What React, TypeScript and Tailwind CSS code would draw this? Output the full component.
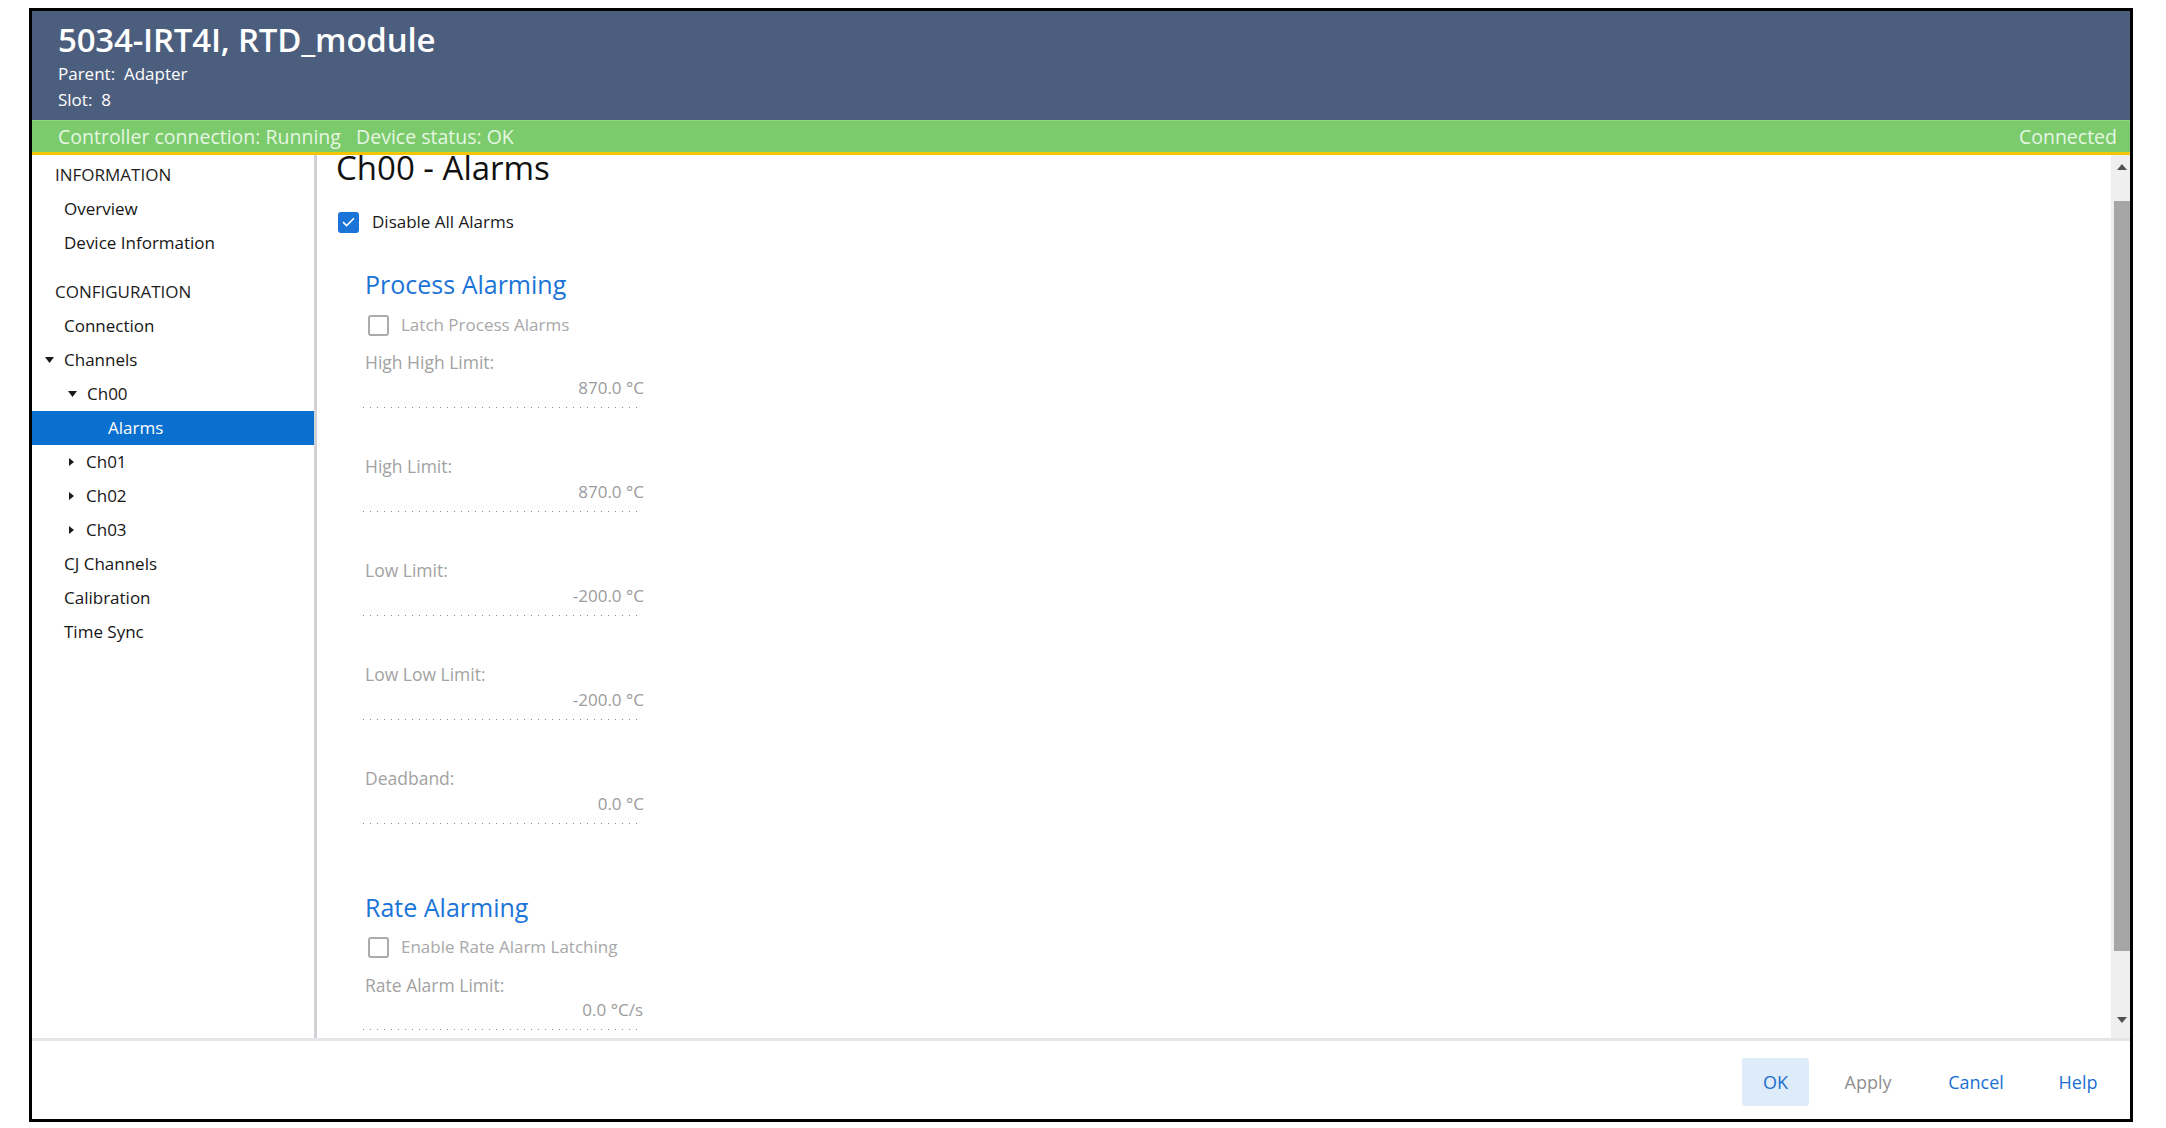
import React from 'react';

const font = { fontFamily: '"Open Sans", "Noto Sans", sans-serif' };

type NavItem = { label: string; indent: number; caret?: 'down' | 'right'; selected?: boolean };

const infoItems: NavItem[] = [
  { label: 'Overview', indent: 32 },
  { label: 'Device Information', indent: 32 },
];

const configItems: NavItem[] = [
  { label: 'Connection', indent: 32 },
  { label: 'Channels', indent: 32, caret: 'down' },
  { label: 'Ch00', indent: 55, caret: 'down' },
  { label: 'Alarms', indent: 76, selected: true },
  { label: 'Ch01', indent: 54, caret: 'right' },
  { label: 'Ch02', indent: 54, caret: 'right' },
  { label: 'Ch03', indent: 54, caret: 'right' },
  { label: 'CJ Channels', indent: 32 },
  { label: 'Calibration', indent: 32 },
  { label: 'Time Sync', indent: 32 },
];

const fields = [
  { label: 'High High Limit:', value: '870.0 °C' },
  { label: 'High Limit:', value: '870.0 °C' },
  { label: 'Low Limit:', value: '-200.0 °C' },
  { label: 'Low Low Limit:', value: '-200.0 °C' },
  { label: 'Deadband:', value: '0.0 °C' },
];

function Caret({ dir }: { dir: 'down' | 'right' }) {
  if (dir === 'down') {
    return (
      <svg width="9" height="6" viewBox="0 0 9 6" className="absolute left-[-19px] top-[14px]">
        <path d="M0 0 H9 L4.5 6 Z" fill="#1a1a1a" />
      </svg>
    );
  }
  return (
    <svg width="5" height="8" viewBox="0 0 5 8" className="absolute left-[-17px] top-[13px]">
      <path d="M0 0 L5 4 L0 8 Z" fill="#1a1a1a" />
    </svg>
  );
}

function NavRow({ item }: { item: NavItem }) {
  return (
    <div
      className={`h-[34px] flex items-center text-[17px] ${item.selected ? 'bg-[#0a70d0] text-white' : 'text-[#161616]'}`}
    >
      <div className="relative h-[34px] flex items-center" style={{ marginLeft: item.indent }}>
        {item.caret && <Caret dir={item.caret} />}
        {item.label}
      </div>
    </div>
  );
}

function Dotted() {
  return (
    <div className="ml-[-2px] w-[277px] h-px bg-[repeating-linear-gradient(to_right,#8e8e8e_0_1px,transparent_1px_7px)]" />
  );
}

function CheckBox({ checked }: { checked?: boolean }) {
  if (checked) {
    return (
      <div className="w-[21px] h-[21px] rounded-[3px] bg-[#1b74d8] flex items-center justify-center">
        <svg width="13" height="10" viewBox="0 0 13 10">
          <path d="M1 5.2 L4.6 8.6 L12 1.2" stroke="#fff" strokeWidth="1.6" fill="none" />
        </svg>
      </div>
    );
  }
  return <div className="w-[21px] h-[21px] rounded-[3px] border-2 border-[#ababab] bg-white" />;
}

function Field({ label, value }: { label: string; value: string }) {
  return (
    <div className="h-[104px]">
      <div className="h-[24px] leading-[24px] text-[17.5px] text-[#a2a2a2]">{label}</div>
      <div className="mt-[3px] w-[279px] h-[22px] leading-[22px] text-[17px] text-[#9c9c9c] text-right">{value}</div>
      <div className="mt-[8px]">
        <Dotted />
      </div>
    </div>
  );
}

export default function App() {
  return (
    <div className="w-[2166px] h-[1128px] bg-white pt-[8px] pl-[29px]" style={font}>
      <div className="w-[2104px] h-[1114px] border-[3px] border-black flex flex-col overflow-hidden">
        {/* header */}
        <div className="h-[109px] bg-[#4c5e7e] pl-[26px] pt-[9px] text-white shrink-0">
          <div className="h-[40px] leading-[40px] text-[33px] font-semibold tracking-[-0.2px]">5034-IRT4I, RTD_module</div>
          <div className="mt-[1px] h-[26px] leading-[26px] text-[17px]">Parent:&nbsp; Adapter</div>
          <div className="h-[26px] leading-[26px] text-[17px]">Slot:&nbsp; 8</div>
        </div>
        {/* status */}
        <div className="h-[32px] bg-[#7bcb6c] border-t border-[#8ed680] flex items-center justify-between pl-[26px] pr-[13px] text-[19.5px] text-[#e6f6e2] shrink-0">
          <span>
            Controller connection: Running&nbsp;&nbsp; Device status: OK
          </span>
          <span>Connected</span>
        </div>
        <div className="h-[3px] bg-[#f3c600] shrink-0" />

        {/* body */}
        <div className="flex-1 flex min-h-0">
          <div className="w-[282px] shrink-0 pt-[3px]">
            <div className="h-[34px] flex items-center pl-[23px] text-[17px] text-[#1e1e1e]">INFORMATION</div>
            {infoItems.map((it) => (
              <NavRow key={it.label} item={it} />
            ))}
            <div className="h-[15px]" />
            <div className="h-[34px] flex items-center pl-[23px] text-[17px] text-[#1e1e1e]">CONFIGURATION</div>
            {configItems.map((it) => (
              <NavRow key={it.label} item={it} />
            ))}
          </div>
          <div className="w-[3px] bg-[#d2d2d6] shrink-0" />

          <div className="flex-1 overflow-hidden pl-[19px]">
            <div className="mt-[-5px] h-[36px] leading-[36px] text-[33px] text-[#111]">Ch00 - Alarms</div>
            <div className="mt-[21px] h-[30px] flex items-center gap-[13px] pl-[2px] text-[17px] text-[#1a1a1a]">
              <CheckBox checked />
              <span>Disable All Alarms</span>
            </div>

            <div className="pl-[29px]">
              <div className="mt-[29px] h-[36px] leading-[36px] text-[25px] text-[#1b74d8]">Process Alarming</div>
              <div className="mt-[8px] h-[30px] flex items-center gap-[12px] pl-[3px] text-[17px] text-[#a8a8a8]">
                <CheckBox />
                <span>Latch Process Alarms</span>
              </div>
              <div className="mt-[10px]">
                {fields.map((f) => (
                  <Field key={f.label} label={f.label} value={f.value} />
                ))}
              </div>

              <div className="mt-[19px] h-[36px] leading-[36px] text-[25px] text-[#1b74d8]">Rate Alarming</div>
              <div className="mt-[7px] h-[30px] flex items-center gap-[12px] pl-[3px] text-[17px] text-[#a8a8a8]">
                <CheckBox />
                <span>Enable Rate Alarm Latching</span>
              </div>
              <div className="mt-[11px]">
                <div className="h-[24px] leading-[24px] text-[17.5px] text-[#a2a2a2]">Rate Alarm Limit:</div>
                <div className="mt-[2px] w-[278px] h-[22px] leading-[22px] text-[17px] text-[#9c9c9c] text-right">0.0 °C/s</div>
                <div className="mt-[8px]">
                  <Dotted />
                </div>
              </div>
            </div>
          </div>

          {/* scrollbar */}
          <div className="w-[19px] shrink-0 bg-[#efefef] flex flex-col items-end">
            <div className="w-full h-[46px] flex justify-center pt-[9px] pl-[3px]">
              <svg width="10" height="6" viewBox="0 0 10 6">
                <path d="M0 6 L5 0 L10 6 Z" fill="#505050" />
              </svg>
            </div>
            <div className="w-[16px] h-[750px] bg-[#a6a6a6]" />
            <div className="flex-1" />
            <div className="w-full h-[22px] flex justify-center pt-[1px] pl-[3px]">
              <svg width="10" height="6" viewBox="0 0 10 6">
                <path d="M0 0 L10 0 L5 6 Z" fill="#505050" />
              </svg>
            </div>
          </div>
        </div>

        <div className="h-[3px] bg-[#e6e6ea] shrink-0" />
        {/* footer */}
        <div className="h-[78px] shrink-0 flex items-start justify-end pt-[17px] pr-[16px] text-[18px]">
          <button className="w-[67px] h-[48px] rounded-[3px] bg-[#deebf8] text-[#1b6fd2]">OK</button>
          <button className="ml-[19px] w-[80px] h-[48px] text-[#8f8f8f]">Apply</button>
          <button className="ml-[24px] w-[88px] h-[48px] text-[#1b6fd2]">Cancel</button>
          <button className="ml-[22px] w-[72px] h-[48px] text-[#1b6fd2]">Help</button>
        </div>
      </div>
    </div>
  );
}
